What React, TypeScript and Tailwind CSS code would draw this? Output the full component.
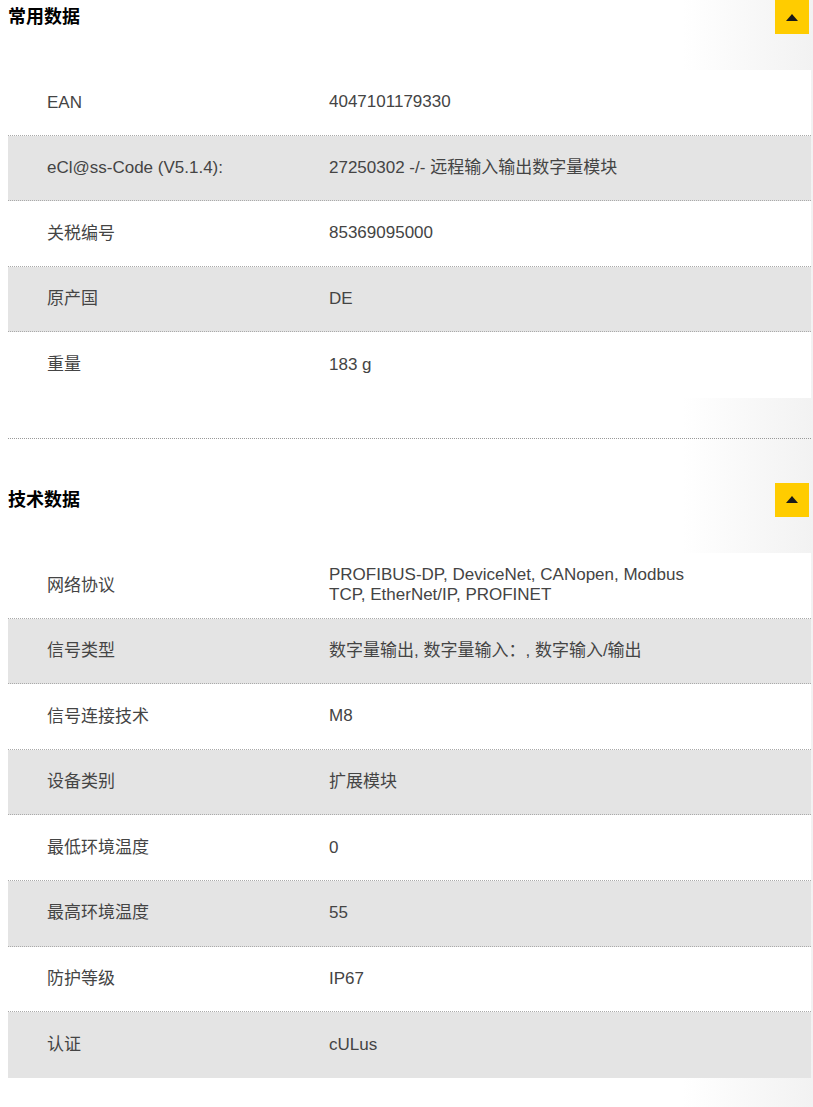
import React from 'react';

type Row = { label: string; value: string };

const general: Row[] = [
  { label: 'EAN', value: '4047101179330' },
  { label: 'eCl@ss-Code (V5.1.4):', value: '27250302 -/- 远程输入输出数字量模块' },
  { label: '关税编号', value: '85369095000' },
  { label: '原产国', value: 'DE' },
  { label: '重量', value: '183 g' },
];

const technical: Row[] = [
  { label: '网络协议', value: 'PROFIBUS-DP, DeviceNet, CANopen, Modbus TCP, EtherNet/IP, PROFINET' },
  { label: '信号类型', value: '数字量输出, 数字量输入：, 数字输入/输出' },
  { label: '信号连接技术', value: 'M8' },
  { label: '设备类别', value: '扩展模块' },
  { label: '最低环境温度', value: '0' },
  { label: '最高环境温度', value: '55' },
  { label: '防护等级', value: 'IP67' },
  { label: '认证', value: 'cULus' },
];

const Section: React.FC<{ title: string; rows: Row[] }> = ({ title, rows }) => (
  <section>
    <div className="flex items-center justify-between h-[34px] pl-2 pr-1">
      <h2 className="text-[18px] font-bold text-black leading-none">{title}</h2>
      <button className="w-[34px] h-[34px] bg-[#ffcc00] flex items-center justify-center">
        <svg width="12" height="7" viewBox="0 0 12 7">
          <path d="M6 0 L12 7 L0 7 Z" fill="#1a1a1a" />
        </svg>
      </button>
    </div>
    <div className="mt-[36px] ml-2 mr-[2px] bg-white">
      {rows.map((r, i) => (
        <div
          key={r.label}
          className={`flex items-center h-[65.6px] ${i % 2 === 1 ? 'bg-[#e4e4e4]' : 'bg-white'} ${
            i < rows.length - 1 ? 'border-b border-dotted border-[#aaa]' : ''
          }`}
        >
          <div className="w-[321px] pl-[39px] shrink-0">{r.label}</div>
          <div className="w-[372px] leading-[20px]">{r.value}</div>
        </div>
      ))}
    </div>
  </section>
);

export default function App() {
  return (
    <div
      className="min-h-screen w-[813px] bg-[linear-gradient(to_right,#ffffff_84%,#f2f2f2)] text-[17px] text-[#444] pb-[29px]"
      style={{ fontFamily: '"Liberation Sans", Arial, "Noto Sans CJK SC", sans-serif' }}
    >
      <Section title="常用数据" rows={general} />
      <div className="ml-2 mr-[2px] mt-[40px] border-t border-dotted border-[#999]" />
      <div className="pt-[44px]">
        <Section title="技术数据" rows={technical} />
      </div>
    </div>
  );
}
